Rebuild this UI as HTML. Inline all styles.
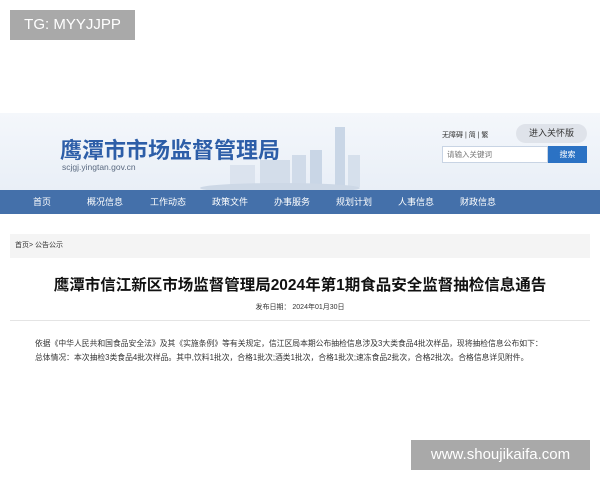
<!DOCTYPE html>
<html><head><meta charset="utf-8"><style>
*{margin:0;padding:0;box-sizing:border-box}
body{width:600px;height:480px;background:#fff;position:relative;overflow:hidden;font-family:"Liberation Sans","Noto Sans CJK SC",sans-serif}
.a{position:absolute;white-space:nowrap}
</style></head><body>
<div class="a" style="left:10px;top:10px;width:125px;height:30px;background:#a9a9a9;color:#fff;font-size:15px;line-height:30px;text-align:center">TG: MYYJJPP</div>
<div class="a" style="left:0;top:113px;width:600px;height:77px;background:linear-gradient(180deg,#f4f7fb,#e9eff7)"></div>
<svg class="a" style="left:200px;top:125px" width="160" height="65">
<g fill="#c9d6e6"><rect x="135" y="2" width="10" height="60"/><rect x="148" y="30" width="20" height="32" fill="#d6e0ec"/><rect x="110" y="25" width="12" height="37"/><rect x="60" y="35" width="30" height="27" fill="#d3ddea"/><rect x="30" y="40" width="25" height="22" fill="#dbe3ee"/><rect x="92" y="30" width="14" height="32" fill="#d0dbe9"/></g>
<ellipse cx="80" cy="63" rx="80" ry="5" fill="#cdd8e6"/></svg>
<div class="a" style="left:60px;top:133px;font-size:22px;font-weight:bold;color:#2d5ea8;letter-spacing:0">鹰潭市市场监督管理局</div>
<div class="a" style="left:62px;top:162px;font-size:8.5px;color:#5a6a80">scjgj.yingtan.gov.cn</div>
<div class="a" style="left:442px;top:130px;font-size:7px;color:#333">无障碍 | 简 | 繁</div>
<div class="a" style="left:516px;top:124px;width:71px;height:19px;border-radius:10px;background:#dfe3ea;color:#333;font-size:9px;line-height:19px;text-align:center">进入关怀版</div>
<div class="a" style="left:442px;top:146px;width:106px;height:17px;background:#fff;border:1px solid #c8d4e4;font-size:7.5px;color:#777;line-height:15px;padding-left:4px">请输入关键词</div>
<div class="a" style="left:548px;top:146px;width:39px;height:17px;background:#2b72c4;color:#fff;font-size:8px;line-height:17px;text-align:center">搜索</div>
<div class="a" style="left:0;top:190px;width:600px;height:24px;background:#4470aa"></div>
<div class="a" style="top:196px;left:0;width:600px;font-size:9px;color:#fff;line-height:12px">
<span class="a" style="left:33px">首页</span><span class="a" style="left:87px">概况信息</span><span class="a" style="left:150px">工作动态</span><span class="a" style="left:212px">政策文件</span><span class="a" style="left:274px">办事服务</span><span class="a" style="left:336px">规划计划</span><span class="a" style="left:398px">人事信息</span><span class="a" style="left:460px">财政信息</span></div>
<div class="a" style="left:10px;top:234px;width:580px;height:24px;background:#f4f4f4;font-size:7px;color:#333;line-height:24px;padding-left:5px">首页&gt; 公告公示</div>
<div class="a" style="left:0;top:273px;width:600px;text-align:center;font-size:15.5px;font-weight:bold;color:#111">鹰潭市信江新区市场监督管理局2024年第1期食品安全监督抽检信息通告</div>
<div class="a" style="left:0;top:302px;width:600px;text-align:center;font-size:7px;color:#333">发布日期： 2024年01月30日</div>
<div class="a" style="left:10px;top:320px;width:580px;height:1px;background:#e4e4e4"></div>
<div class="a" style="left:35px;top:338px;font-size:7.8px;color:#333">依据《中华人民共和国食品安全法》及其《实施条例》等有关规定，信江区局本期公布抽检信息涉及3大类食品4批次样品，现将抽检信息公布如下：</div>
<div class="a" style="left:35px;top:352px;font-size:7.8px;color:#333">总体情况：本次抽检3类食品4批次样品。其中,饮料1批次，合格1批次;酒类1批次，合格1批次;速冻食品2批次，合格2批次。合格信息详见附件。</div>
<div class="a" style="left:411px;top:440px;width:179px;height:30px;background:#a9a9a9;color:#fff;font-size:15px;line-height:30px;text-align:center">www.shoujikaifa.com</div>
</body></html>
